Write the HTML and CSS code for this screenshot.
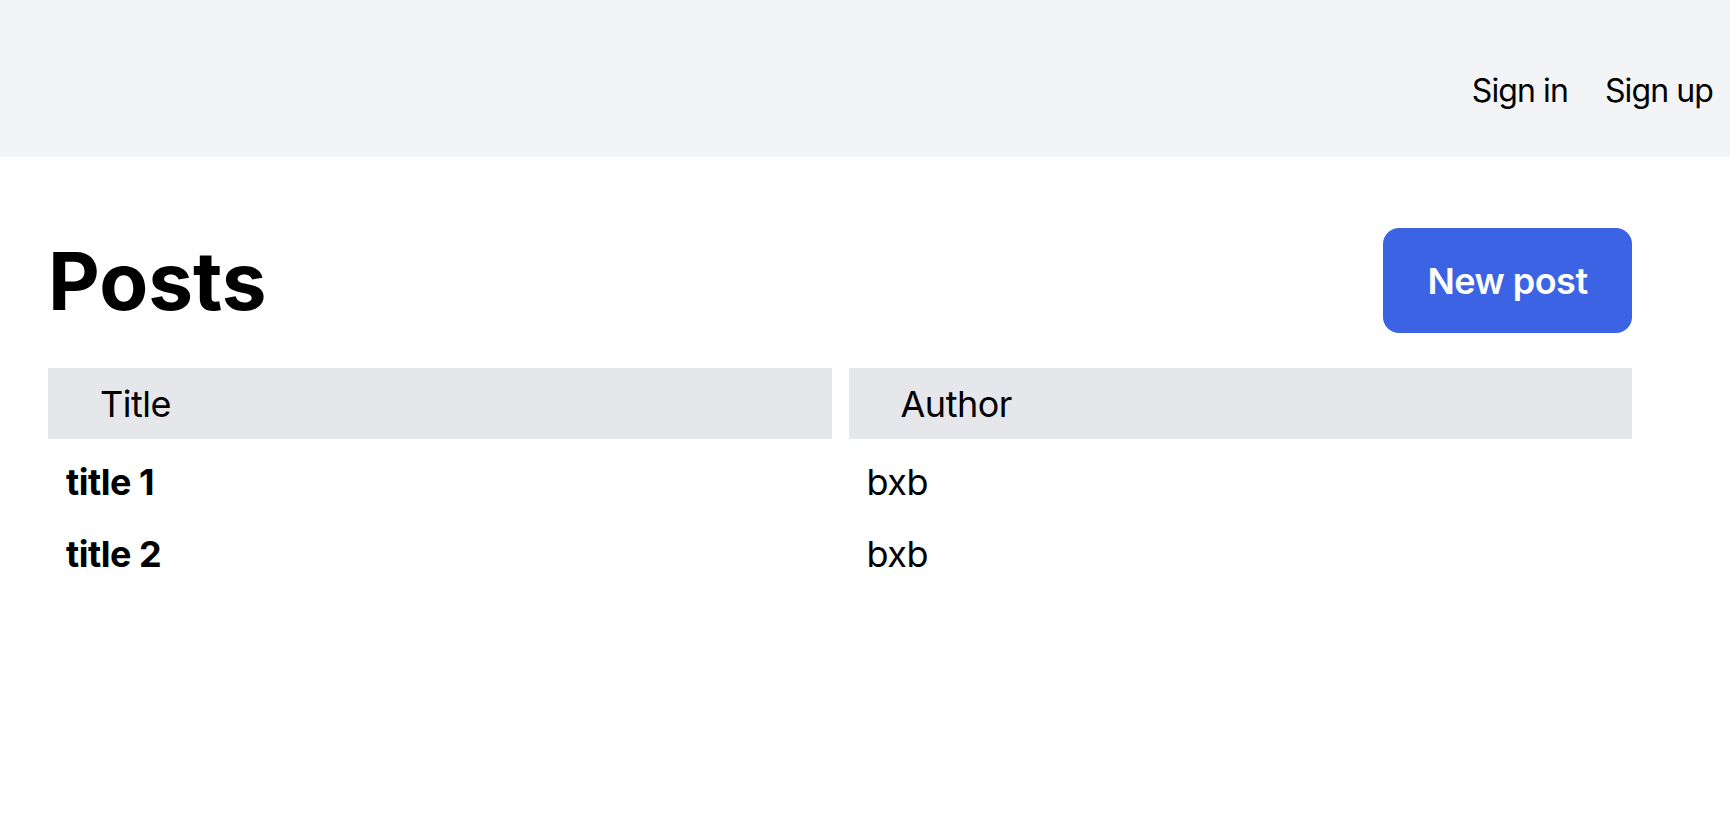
FILE: index.html
```html
<!DOCTYPE html>
<html lang="en">
<head>
<meta charset="utf-8">
<title>Posts</title>
<link rel="stylesheet" href="styles.css">
</head>
<body>
<header class="topbar">
  <nav class="nav">
    <a class="nav-link" href="#">Sign in</a>
    <a class="nav-link" href="#">Sign up</a>
  </nav>
</header>
<main class="content">
  <div class="page-head">
    <h1 class="page-title">Posts</h1>
    <a class="btn-primary" href="#">New post</a>
  </div>
  <div class="posts-table">
    <div class="row row-head">
      <div class="th">Title</div>
      <div class="th">Author</div>
    </div>
    <div class="tbody">
      <div class="row">
        <div class="td td-title">title 1</div>
        <div class="td">bxb</div>
      </div>
      <div class="row">
        <div class="td td-title">title 2</div>
        <div class="td">bxb</div>
      </div>
    </div>
  </div>
</main>
</body>
</html>
```

FILE: styles.css
```css
* { box-sizing: border-box; }
html, body {
  margin: 0;
  padding: 0;
  background: #ffffff;
  color: #000000;
  font-family: "Inter", "Noto Sans", sans-serif;
}
.topbar {
  height: 157px;
  background: #f3f4f6;
  display: flex;
  justify-content: flex-end;
  align-items: flex-start;
  padding: 71px 17px 0 0;
}
.nav {
  display: flex;
  gap: 37px;
}
.nav-link {
  color: #000;
  text-decoration: none;
  font-size: 32px;
  line-height: 40px;
  letter-spacing: -0.9px;
}
.content {
  padding: 71px 98px 0 48px;
}
.page-head {
  display: flex;
  justify-content: space-between;
  align-items: center;
  height: 105px;
  margin-bottom: 35px;
}
.page-title {
  margin: 0;
  font-size: 80px;
  font-weight: 700;
  line-height: 1;
}
.btn-primary {
  display: flex;
  align-items: center;
  justify-content: center;
  width: 249px;
  height: 105px;
  background: #3b63e3;
  color: #fff;
  text-decoration: none;
  font-size: 36px;
  font-weight: 600;
  letter-spacing: -0.5px;
  border-radius: 16px;
}
.row {
  display: grid;
  grid-template-columns: 1fr 1fr;
  column-gap: 17px;
  height: 72px;
}
.row-head {
  height: 71px;
}
.tbody {
  padding-top: 7px;
}
.th {
  background: #e5e7eb;
  display: flex;
  align-items: center;
  padding-left: 52px;
  font-size: 36px;
  font-weight: 400;
  letter-spacing: -0.5px;
}
.td {
  display: flex;
  align-items: center;
  padding-left: 18px;
  font-size: 36px;
  letter-spacing: -0.5px;
}
.td-title { font-weight: 700; }
```
